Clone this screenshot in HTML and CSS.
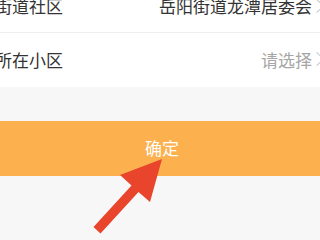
FILE: index.html
```html
<!DOCTYPE html>
<html lang="zh">
<head>
<meta charset="utf-8">
<link rel="stylesheet" href="styles.css">
</head>
<body>
<div class="page">
  <div class="form">
    <div class="row first">
      <span class="label">街道社区</span>
      <span class="value">岳阳街道龙潭居委会</span>
      <span class="chev"></span>
    </div>
    <div class="row second">
      <span class="label">所在小区</span>
      <span class="value placeholder">请选择</span>
      <span class="chev"></span>
    </div>
  </div>
  <div class="spacer"></div>
  <button class="confirm">确定</button>
  <div class="bottom"></div>
  <svg class="arrow" width="320" height="240" viewBox="0 0 320 240">
    <polygon points="162,159 120,175 131.5,185.5 93.5,227 100.5,233.5 138.5,192 150,202" fill="#e8452c"/>
  </svg>
</div>
</body>
</html>
```
FILE: styles.css
```css
* { box-sizing: border-box; }
html, body {
  margin: 0;
  padding: 0;
  width: 320px;
  height: 240px;
  overflow: hidden;
  background: #f7f7f7;
  font-family: "Noto Sans CJK SC", "Noto Sans", sans-serif;
}
.page {
  position: relative;
  width: 320px;
  height: 240px;
  overflow: hidden;
}
.form {
  background: #fff;
  margin-top: -21px;
}
.row {
  display: flex;
  align-items: center;
  height: 54px;
  font-size: 17px;
  color: #333;
}
.row.first {
  border-bottom: 1px solid #eeeeee;
}
.row.second {
  padding-bottom: 2px;
}
.label {
  margin-left: -5px;
  flex: 1;
  white-space: nowrap;
}
.value {
  white-space: nowrap;
  color: #333;
}
.value.placeholder {
  color: #a6a6a6;
}
.chev {
  width: 10px;
  height: 10px;
  margin-left: 0;
  margin-right: -2px;
  border-top: 1.5px solid #c4c4c4;
  border-right: 1.5px solid #c4c4c4;
  transform: rotate(45deg);
  flex: none;
}
.spacer {
  height: 34px;
}
.confirm {
  display: block;
  width: 320px;
  height: 55px;
  border: 0;
  margin: 0;
  padding: 0 0 2px 4px;
  background: #fdb04e;
  color: #fff;
  font-family: "Noto Sans CJK SC", "Noto Sans", sans-serif;
  font-size: 17px;
}
.bottom {
  height: 64px;
}
.arrow {
  position: absolute;
  left: 0;
  top: 0;
}
```
